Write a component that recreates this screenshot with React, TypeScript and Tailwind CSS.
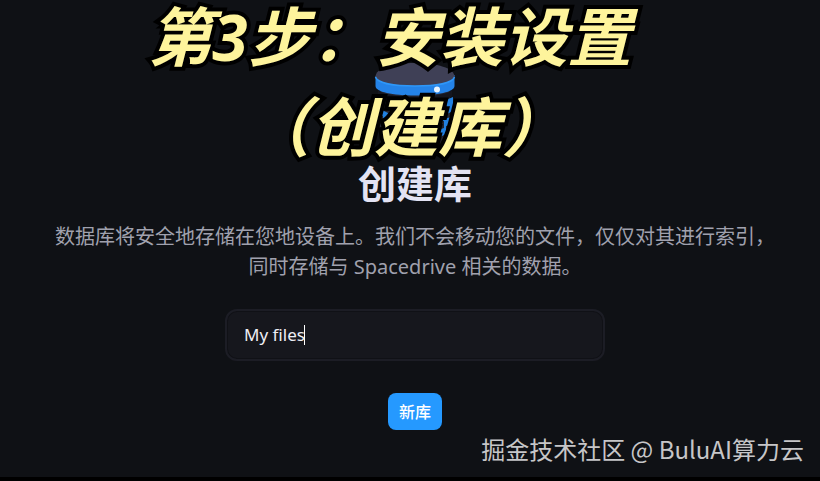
import { useState } from 'react';
import type { FormEvent } from 'react';

function DatabaseLogo() {
  return (
    <svg viewBox="0 0 84 100" className="w-[84px] h-[100px]" aria-hidden="true">
      <path d="M7 28v52c0 8 16 14 35 14s35-6 35-14V28z" fill="#242531" />
      <path d="M5 30c8 9 66 9 74 0v6c-8 9-66 9-74 0z" fill="#15161e" />
      {/* blue pixel pattern on the side of the drum */}
      <path d="M73 40l7-3v14l-6 3v6l-8 2v-8l8-3z" fill="#2180e0" />
      <path d="M71 59l7-2v8l-5 1v8l-8 4h-3v-7l9-3z" fill="#2180e0" />
      <path d="M7 49l8 4v8l-5-2v-3l-3-1z" fill="#2180e0" />
      <path d="M2.500 16v10c0 6 17 9.500 39.500 9.500s39.500-3.500 39.500-9.500V15z" fill="#2483e8" />
      <path d="M2.500 17C2.500 8 20 3 42 3s39.500 5 39.500 14c-2 6-18 9-39.500 9s-37.500-3-39.500-9z" fill="#3f4056" />
      <path d="M2.500 17c2 6 18 9 39.500 9s37.500-3 39.500-9" fill="none" stroke="#2e97f8" strokeWidth="1.500" />
      <circle cx="64" cy="29.500" r="3" fill="#e8f4ff" />
    </svg>
  );
}

function Caption() {
  return (
    <div className="absolute inset-x-0 top-0 flex flex-col gap-4 pr-10 text-center text-[64px] leading-[74px] font-bold italic text-[#fef49c] [paint-order:stroke_fill] [-webkit-text-stroke:8px_#000] [text-shadow:2px_2px_0_#000] pointer-events-none">
      <p>第3步：安装设置</p>
      <p className="pl-8">（创建库）</p>
    </div>
  );
}

export default function App() {
  const [name, setName] = useState('My files');

  const handleSubmit = (e: FormEvent) => {
    e.preventDefault();
  };

  return (
    <div className="relative min-h-screen overflow-hidden border-b-4 border-black bg-[#0f1115] font-['Noto_Sans','Noto_Sans_CJK_SC',sans-serif]">
      <main className="flex flex-col items-center pt-[60px] pl-[10px]">
        <DatabaseLogo />
        <h1 className="text-[38px] leading-[46px] font-bold text-[#e3e3f3]">创建库</h1>
        <p className="mt-4 w-full max-w-[730px] text-center text-xl leading-[30px] text-[#a0a1ae]">
          数据库将安全地存储在您地设备上。我们不会移动您的文件，仅仅对其进行索引，同时存储与 Spacedrive 相关的数据。
        </p>

        <form onSubmit={handleSubmit} className="mt-[27px] flex w-full flex-col items-center">
          <div className="relative w-full max-w-[380px]">
            <input
              type="text"
              aria-label="库"
              autoFocus
              value={name}
              onChange={(e) => setName(e.target.value)}
              className="h-[52px] w-full rounded-xl border-2 border-[#1c1d25] bg-[#16171d] px-[17px] pb-0.5 text-[17px] text-[#eeeef4] caret-transparent outline-none shadow-[inset_0_0_0_1px_#101116]"
            />
            <span className="absolute top-4 left-[79px] h-5 w-px bg-white" aria-hidden="true" />
          </div>
          <button
            type="submit"
            className="mt-8 h-[37px] rounded-lg bg-[#2599ff] px-[11px] text-base font-medium text-white"
          >
            新库
          </button>
        </form>
      </main>

      <Caption />

      <footer className="absolute right-4 bottom-2.5 text-2xl leading-9 text-[#c6c6c8] font-['Noto_Sans_CJK_SC',sans-serif]">
        掘金技术社区 @ BuluAI算力云
      </footer>
    </div>
  );
}
